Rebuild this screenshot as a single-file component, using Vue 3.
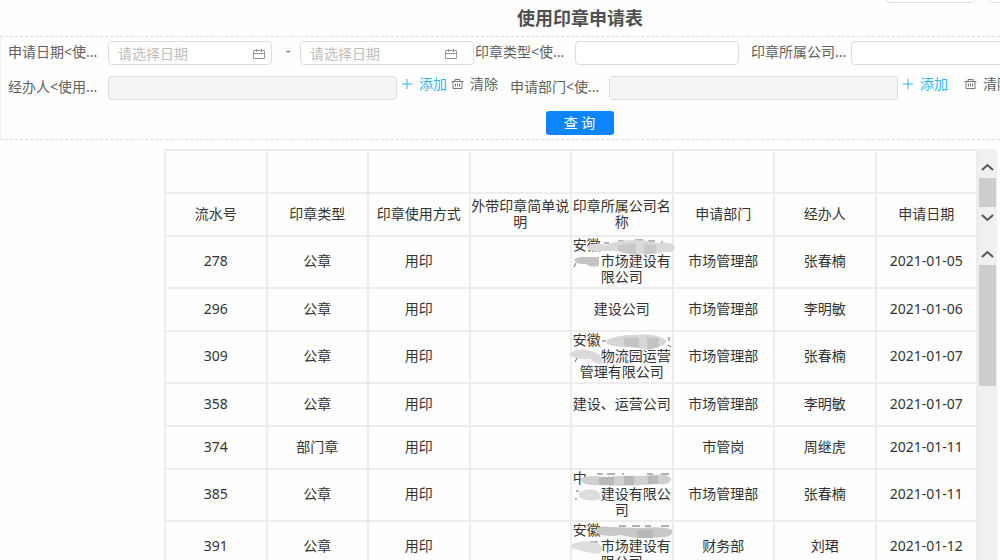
<script setup>
const headers = ['流水号', '印章类型', '印章使用方式', '外带印章简单说明', '印章所属公司名称', '申请部门', '经办人', '申请日期']

const rows = [
  {
    id: '278', type: '公章', dept: '市场管理部', person: '张春楠', date: '2021-01-05',
    lines: [{ text: '安徽', gap: 5 }, { lead: 2, text: '市场建设有' }, { text: '限公司' }],
    masks: [
      { d: 'M15 9Q20 5 34 8L47 4Q68 1 86 6Q101 4 103 10Q103 16 93 15Q82 17 72 17Q58 19 46 14L24 14Q15 15 15 9Z', fill: '#dadada' },
      { d: 'M46 8L64 6V18L46 14Z M72 7L84 8V16L72 18Z', fill: '#c9c9c9' },
      { d: 'M2 22Q8 19 16 20L27 20V29Q18 31 14 27Q3 28 2 22Z', fill: '#c3c3c3' },
    ],
    specks: 'M32 6h5 M46 4h6 M63 3h8 M76 4h7 M90 4v5 M4 26l-2 4',
  },
  { id: '296', type: '公章', dept: '市场管理部', person: '李明敏', date: '2021-01-06', lines: [{ text: '建设公司' }] },
  {
    id: '309', type: '公章', dept: '市场管理部', person: '张春楠', date: '2021-01-07',
    lines: [{ text: '安徽', gap: 5 }, { lead: 2, text: '物流园运营' }, { text: '管理有限公司' }],
    masks: [
      { d: 'M35 8Q45 3 62 3Q83 1 94 8Q94 14 84 15Q73 20 64 15Q45 16 35 12Z', fill: '#d6d6d6' },
      { d: 'M52 6h15v10L52 14Z M75 6h12v9L75 18Z', fill: '#c4c4c4' },
      { d: 'M-3 22Q6 15 18 19Q31 21 30 31Q26 34 18 27Q0 28 -3 22Z', fill: '#dadada' },
    ],
    specks: 'M30 9h4 M97 5v4 M96 13l3 2 M5 26l-2 4',
  },
  { id: '358', type: '公章', dept: '市场管理部', person: '李明敏', date: '2021-01-07', lines: [{ text: '建设、运营公司' }] },
  { id: '374', type: '部门章', dept: '市管岗', person: '周继虎', date: '2021-01-11', lines: [] },
  {
    id: '385', type: '公章', dept: '市场管理部', person: '张春楠', date: '2021-01-11',
    lines: [{ text: '中', gap: 6 }, { lead: 2, text: '建设有限公' }, { text: '司' }],
    masks: [
      { d: 'M8 9Q16 4 32 7Q55 5 72 6Q96 2 99 9Q98 16 86 14Q54 17 27 15Q10 16 8 9Z', fill: '#cfcfcf' },
      { d: 'M27 7h15v8H27Z M52 6h10v9H52Z M76 6h10v8H76Z', fill: '#b9b9b9' },
      { d: 'M7 23Q17 16 27 22L29 29Q15 33 7 27Z', fill: '#dddddd' },
    ],
    specks: 'M25 4h6 M35 4h8 M51 5v-2 M75 4h6 M89 4h8 M4 21h3 M4 28v2',
  },
  {
    id: '391', type: '公章', dept: '财务部', person: '刘珺', date: '2021-01-12',
    lines: [{ text: '安徽', gap: 5 }, { lead: 2, text: '市场建设有' }, { text: '限公司' }],
    masks: [
      { d: 'M23 9Q26 3 38 5L69 6Q94 4 100 8Q102 15 90 15Q65 18 49 13Q28 16 23 9Z', fill: '#c8c8c8' },
      { d: 'M65 8h16v8H65Z', fill: '#b8b8b8' },
      { d: 'M-1 23Q12 16 27 22Q34 28 26 32Q12 30 -1 26Z', fill: '#dedede' },
    ],
    specks: 'M47 4h7 M60 4h8 M73 4h6 M89 4h8 M7 21h5 M18 20h8',
  },
]
</script>

<template>
  <div class="page">
    <header class="title-bar">
      <h1>使用印章申请表</h1>
      <div class="toolbar">
        <button type="button" aria-label="导出"></button>
        <button type="button" aria-label="打印"></button>
      </div>
    </header>

    <form class="filters" @submit.prevent>
      <div class="row">
        <label class="name" for="from">申请日期&lt;使...</label>
        <span class="date">
          <input id="from" type="text" placeholder="请选择日期" />
          <svg viewBox="0 0 14 12" width="14" height="12"><path d="M1.5 2.5h11v8h-11zM1.5 5.5h11M4.5 1v3M9.5 1v3" /></svg>
        </span>
        <span class="dash">-</span>
        <span class="date second">
          <input type="text" placeholder="请选择日期" aria-label="结束日期" />
          <svg viewBox="0 0 14 12" width="14" height="12"><path d="M1.5 2.5h11v8h-11zM1.5 5.5h11M4.5 1v3M9.5 1v3" /></svg>
        </span>
        <label class="name snug" for="kind">印章类型&lt;使...</label>
        <input id="kind" class="short" type="text" />
        <label class="name company" for="company">印章所属公司...</label>
        <input id="company" class="short" type="text" />
      </div>

      <div class="row">
        <label class="name" for="person">经办人&lt;使用...</label>
        <input id="person" class="long" type="text" readonly />
        <div class="actions">
          <button type="button" class="link add">
            <svg viewBox="0 0 12 12" width="12" height="12"><path d="M6 1v10M1 6h10" /></svg>添加
          </button>
          <button type="button" class="link">
            <svg viewBox="0 0 13 12" width="13" height="12"><path d="M.5 3.5h12M4 3.5V1.5h5v2M2 3.5v7h9v-7M4.5 5.5v3M6.5 5.5v3M8.5 5.5v3" /></svg>清除
          </button>
        </div>
        <label class="name dept" for="dept">申请部门&lt;使...</label>
        <input id="dept" class="long" type="text" readonly />
        <div class="actions wide">
          <button type="button" class="link add">
            <svg viewBox="0 0 12 12" width="12" height="12"><path d="M6 1v10M1 6h10" /></svg>添加
          </button>
          <button type="button" class="link">
            <svg viewBox="0 0 13 12" width="13" height="12"><path d="M.5 3.5h12M4 3.5V1.5h5v2M2 3.5v7h9v-7M4.5 5.5v3M6.5 5.5v3M8.5 5.5v3" /></svg>清除
          </button>
        </div>
      </div>

      <div class="submit">
        <button type="submit" class="query">查 询</button>
      </div>
    </form>

    <main class="report">
      <table>
        <thead>
          <tr><td v-for="h in headers" :key="h"></td></tr>
          <tr><th v-for="h in headers" :key="h" scope="col">{{ h }}</th></tr>
        </thead>
        <tbody>
          <tr v-for="r in rows" :key="r.id">
            <td>{{ r.id }}</td>
            <td>{{ r.type }}</td>
            <td>用印</td>
            <td></td>
            <td>
              <div class="company-name">
                <div v-for="(l, i) in r.lines" :key="i">
                  <span v-if="l.lead" class="hidden-text" :style="{ width: l.lead + 'em' }"></span>{{ l.text }}<span v-if="l.gap" class="hidden-text" :style="{ width: l.gap + 'em' }"></span>
                </div>
                <svg v-if="r.masks" class="mask" viewBox="0 0 100 48" width="100" height="48">
                  <path :d="r.specks" class="speck" />
                  <path v-for="m in r.masks" :key="m.d" :d="m.d" :fill="m.fill" />
                </svg>
              </div>
            </td>
            <td>{{ r.dept }}</td>
            <td>{{ r.person }}</td>
            <td>{{ r.date }}</td>
          </tr>
        </tbody>
      </table>
      <div class="scrollbars" aria-hidden="true">
        <div class="bar head">
          <svg viewBox="0 0 19 29" width="19" height="29"><path d="M4 21l5.5-5 5.5 5" /></svg>
          <i></i>
          <svg viewBox="0 0 19 29" width="19" height="29"><path d="M4 8l5.5 5 5.5-5" /></svg>
        </div>
        <div class="bar body">
          <svg viewBox="0 0 19 29" width="19" height="29"><path d="M4 21l5.5-5 5.5 5" /></svg>
          <i></i>
        </div>
      </div>
    </main>
  </div>
</template>

<style>
body {
  margin: 0;
  background: #fff;
}
</style>

<style scoped>
* {
  box-sizing: border-box;
}
.page {
  display: flex;
  flex-direction: column;
  height: 100vh;
  overflow: hidden;
  color: #606060;
  background: #fefefe;
  font: 14px/16px "Noto Sans", "Noto Sans CJK SC", sans-serif;
}
button,
input {
  font: inherit;
}
.title-bar {
  position: relative;
  flex: none;
  height: 37px;
  padding-left: 160px;
  border-bottom: 1px dashed #ddd;
}
h1 {
  margin: 0;
  text-align: center;
  font-size: 18px;
  line-height: 36px;
  font-weight: 700;
  color: #505050;
}
.toolbar {
  position: absolute;
  top: -22px;
  right: -78px;
  display: flex;
  gap: 12px;
}
.toolbar button {
  width: 90px;
  height: 25px;
  border: 1px solid #ddd;
  border-radius: 4px;
  background: #fff;
}
.filters {
  flex: none;
  display: flex;
  flex-direction: column;
  gap: 11px;
  padding: 4px 0;
  border-bottom: 1px dashed #ddd;
  border-left: 1px solid #f2f2f2;
}
.row {
  display: flex;
  height: 24px;
  padding-left: 7px;
}
.row > * {
  flex: none;
}
.name {
  width: 100px;
  line-height: 22px;
  white-space: nowrap;
}
.name.snug {
  width: 101px;
  padding-left: 1px;
}
.name.company {
  width: 112px;
  padding-left: 12px;
}
.name.dept {
  width: 99px;
}
input {
  height: 24px;
  padding: 0 9px;
  border: 1px solid #dcdcdc;
  border-radius: 4px;
  outline: 0;
  background: #fff;
  color: #606060;
}
input::placeholder {
  color: #bdbdbd;
  opacity: 1;
}
input[readonly] {
  background: #f5f5f5;
}
.date {
  position: relative;
  width: 164px;
}
.date.second {
  width: 174px;
}
.date input {
  width: 100%;
}
.date svg {
  position: absolute;
  top: 7px;
  right: 6px;
}
.date.second svg {
  right: 16px;
}
svg {
  fill: none;
  stroke: #999;
}
.dash {
  width: 28px;
  padding-left: 14px;
  line-height: 20px;
}
.short {
  width: 164px;
}
.long {
  width: 289px;
}
.actions {
  display: flex;
  align-items: flex-start;
  gap: 4px;
  width: 113px;
  padding-left: 4px;
}
.actions.wide {
  gap: 16px;
}
.link {
  display: flex;
  flex: none;
  align-items: center;
  gap: 6px;
  padding: 0;
  border: 0;
  background: none;
  color: #606060;
  line-height: 16px;
}
.link svg {
  stroke: #777;
}
.link.add {
  color: #2fb4f6;
}
.link.add svg {
  stroke: #2fb4f6;
}
.submit {
  display: flex;
  justify-content: center;
  padding-left: 158px;
}
.query {
  width: 68px;
  height: 24px;
  padding: 0;
  border: 0;
  border-radius: 3px;
  background: #0d85ff;
  color: #fff;
}
.report {
  flex: 1;
  display: flex;
  align-items: flex-start;
  min-height: 0;
  margin: 9px 3px 0 164px;
  overflow: hidden;
}
table {
  flex: 1;
  width: 100%;
  table-layout: fixed;
  border-collapse: collapse;
  color: #333;
  text-align: center;
}
th,
td {
  height: 43px;
  padding: 0 0 2px;
  border: 2px solid #ededed;
  font-weight: 400;
}
.company-name {
  position: relative;
  white-space: nowrap;
}
.hidden-text {
  display: inline-block;
}
.mask {
  position: absolute;
  top: 0;
  left: 0;
  overflow: visible;
  stroke: none;
}
.speck {
  stroke: #666;
}
.scrollbars {
  flex: none;
  display: flex;
  flex-direction: column;
  align-self: stretch;
  width: 19px;
  background: #f0f0f0;
}
.bar {
  display: flex;
  flex-direction: column;
  align-items: stretch;
}
.bar.head {
  height: 87px;
}
.bar i {
  margin: 0 1px;
  background: #cdcdcd;
}
.bar.head i {
  flex: 1;
}
.bar.body i {
  height: 121px;
}
.bar svg {
  flex: none;
  stroke: #555;
  stroke-width: 2;
}
</style>
